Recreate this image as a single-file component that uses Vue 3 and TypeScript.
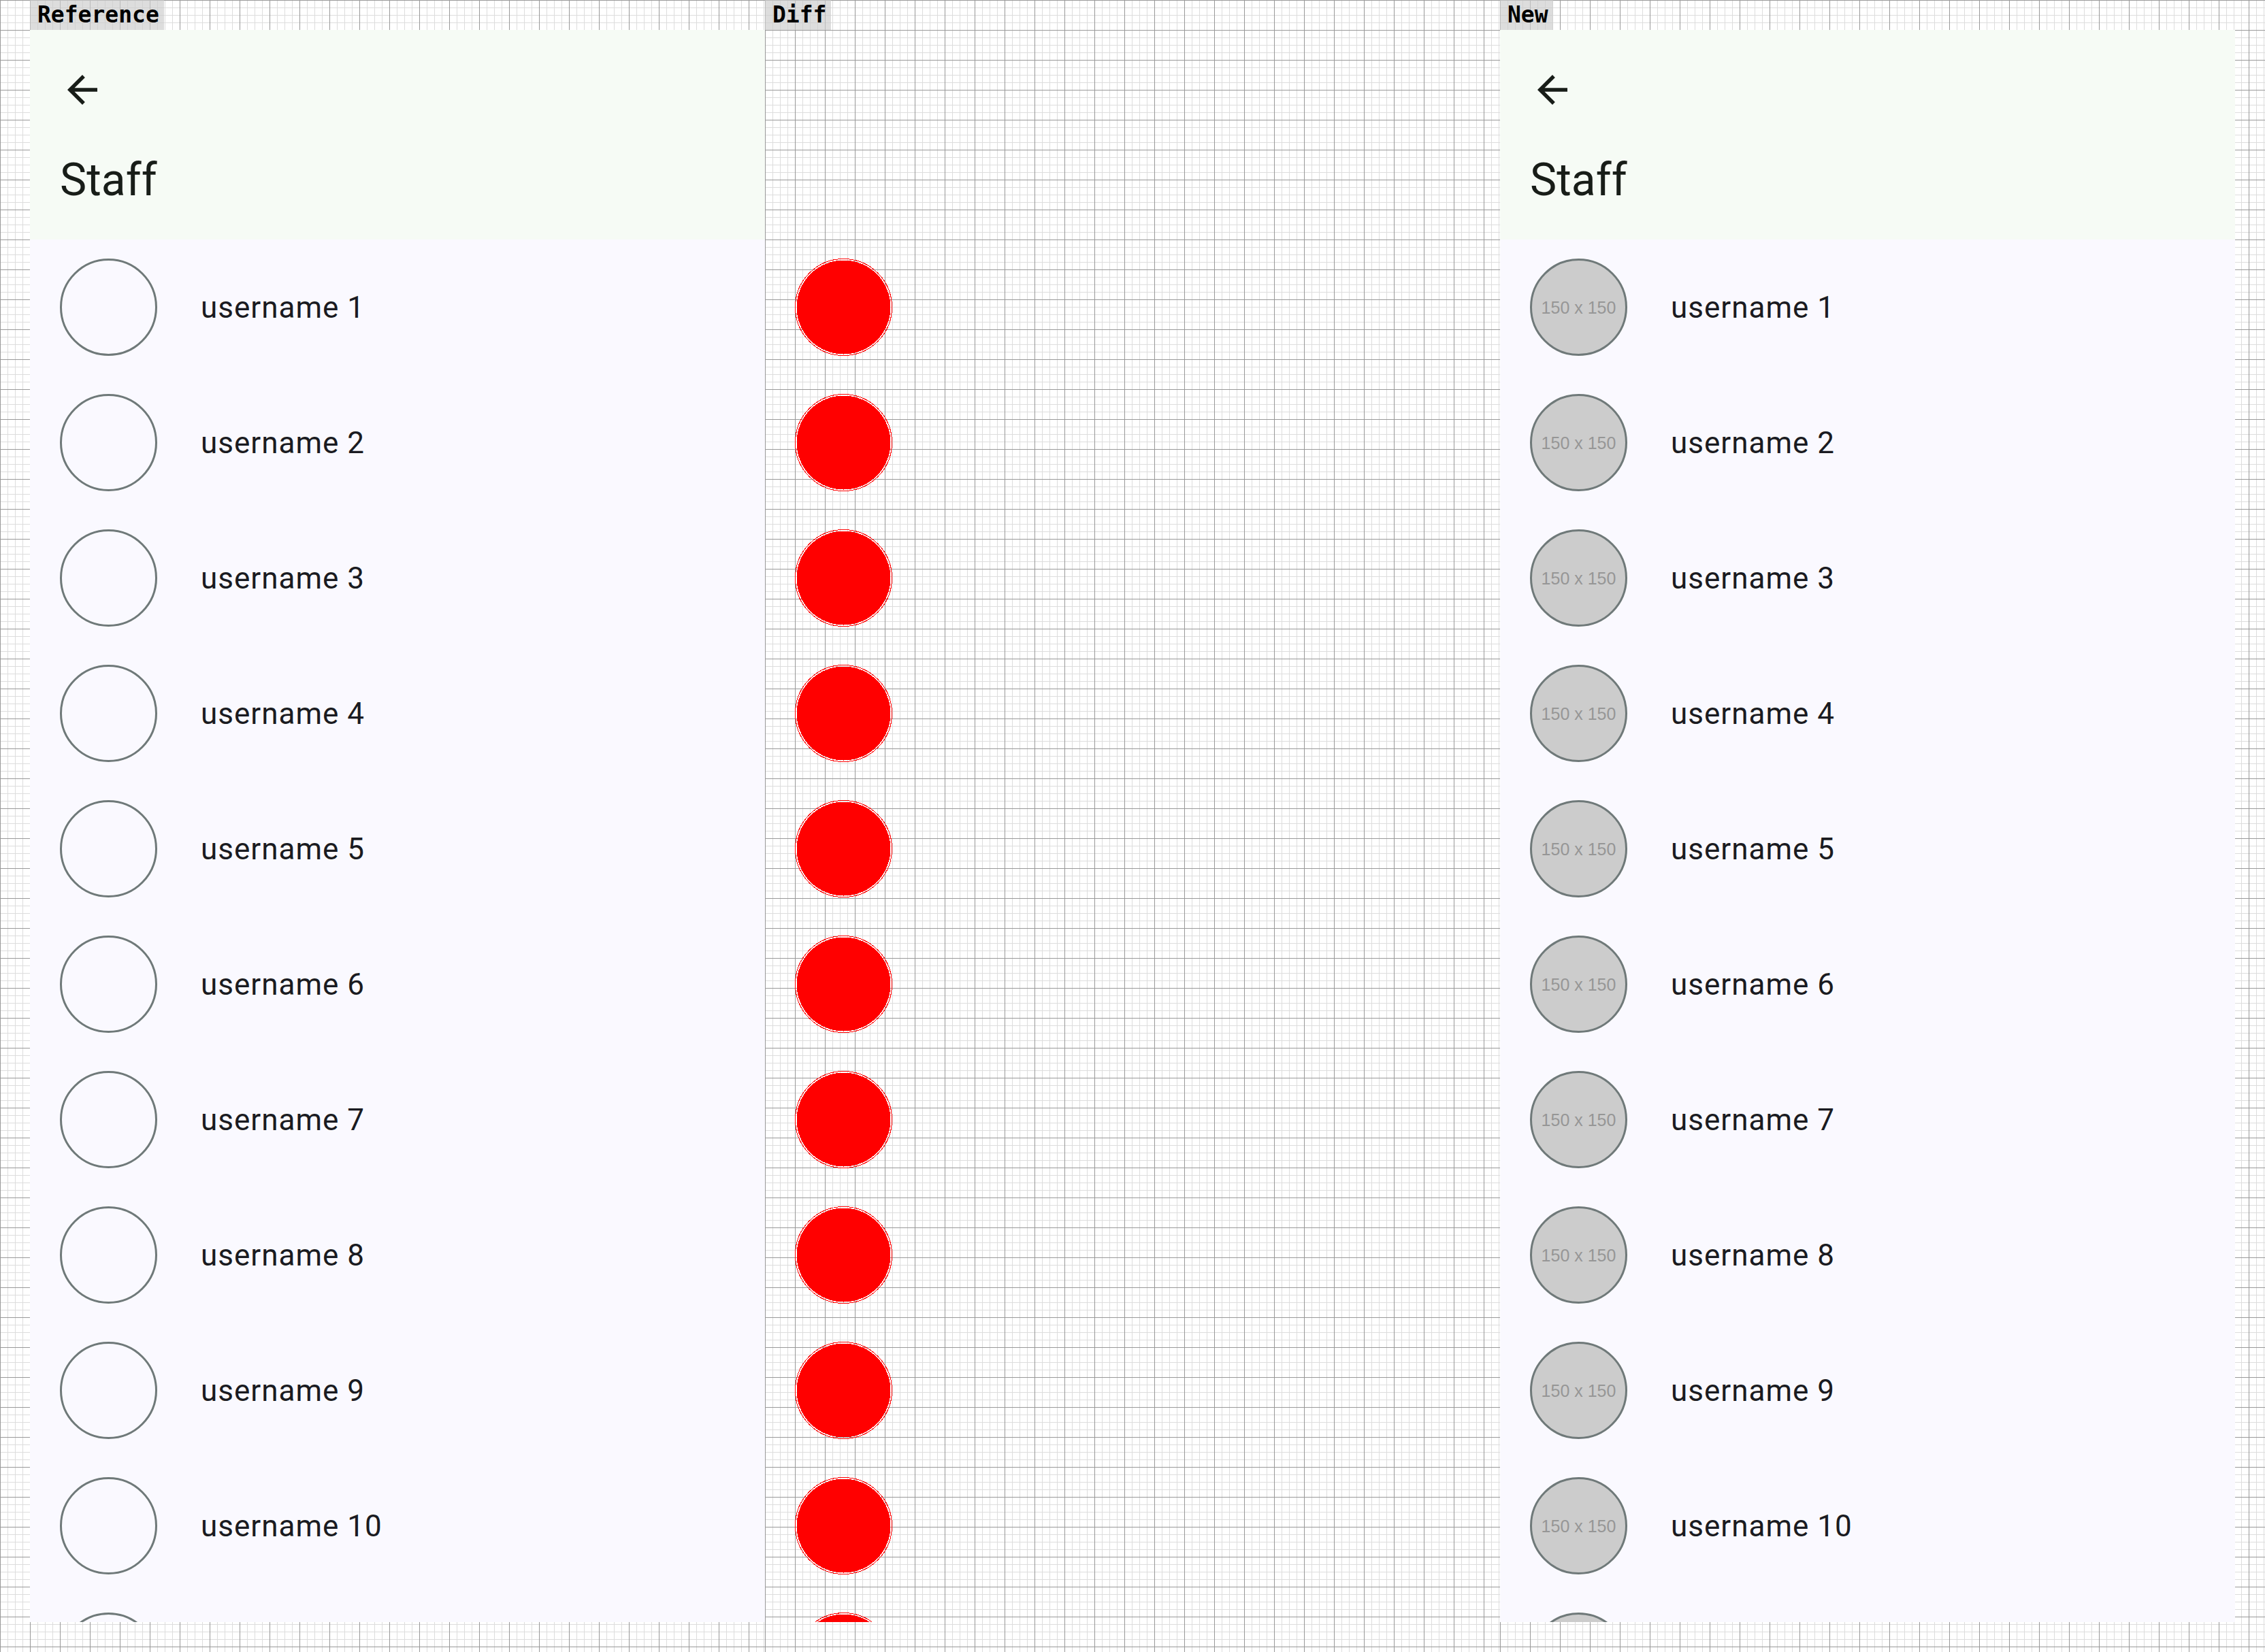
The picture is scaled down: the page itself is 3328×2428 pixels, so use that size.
<script setup lang="ts">
type Variant = 'reference' | 'new'

interface Panel {
  label: string
  variant: Variant | 'diff'
}

const panels: Panel[] = [
  { label: 'Reference', variant: 'reference' },
  { label: 'Diff', variant: 'diff' },
  { label: 'New', variant: 'new' },
]

// The last row is only partly scrolled into view, so it has no visible name.
const users: string[] = [...Array.from({ length: 10 }, (_, i) => `username ${i + 1}`), '']
</script>

<template>
  <main class="board">
    <section v-for="panel in panels" :key="panel.label" class="panel">
      <h2 class="label"><span>{{ panel.label }}</span></h2>

      <div v-if="panel.variant === 'diff'" class="screen">
        <div class="top-bar"></div>
        <ul class="list">
          <li v-for="user in users" :key="user" class="row">
            <svg class="mark" viewBox="0 0 143 143" aria-hidden="true">
              <circle cx="71.5" cy="71.5" r="71" fill="none" stroke="#f00" />
              <circle cx="71.5" cy="71.5" r="69" fill="#f00" />
            </svg>
          </li>
        </ul>
      </div>

      <div v-else class="screen app">
        <header class="top-bar filled">
          <button class="back" type="button" aria-label="Back">
            <svg viewBox="0 0 24 24" aria-hidden="true">
              <path d="M20 11H7.83l5.59-5.59L12 4l-8 8 8 8 1.41-1.41L7.83 13H20v-2z" fill="currentColor" />
            </svg>
          </button>
          <h1 class="title">Staff</h1>
        </header>
        <ul class="list">
          <li v-for="user in users" :key="user" class="row">
            <span class="avatar" :class="{ loaded: panel.variant === 'new' }">
              <template v-if="panel.variant === 'new' && user">150 x 150</template>
            </span>
            <span v-if="user" class="name">{{ user }}</span>
          </li>
        </ul>
      </div>
    </section>
  </main>
</template>

<style>
body {
  margin: 0;
}
</style>

<style scoped>
.board,
.panel {
  background-color: #fff;
  background-image:
    linear-gradient(to right, #999 1px, transparent 1px),
    linear-gradient(to bottom, #999 1px, transparent 1px),
    linear-gradient(to right, #ddd 1px, transparent 1px),
    linear-gradient(to bottom, #ddd 1px, transparent 1px);
  background-size: 44px 44px, 44px 44px, 11px 11px, 11px 11px;
}

.board {
  display: grid;
  grid-template-columns: 44px 1fr 1fr 1fr 44px;
  height: 100vh;
  box-sizing: border-box;
}

.panel {
  display: flex;
  flex-direction: column;
  min-width: 0;
  min-height: 0;
  box-sizing: border-box;
  padding-bottom: 44px;
}

.panel:first-child {
  grid-column: 2;
}

.panel:last-child {
  grid-column: 4 / 6;
  padding-right: 44px;
}

.label {
  display: flex;
  flex: none;
  height: 44px;
  margin: 0;
  font: bold 33px/44px "DejaVu Sans Mono", monospace;
  color: #000;
}

.label span {
  padding: 0 7px 0 11px;
  background: rgba(204, 204, 204, 0.67);
}

.screen {
  flex: 1;
  min-height: 0;
  overflow: hidden;
  font-family: Roboto, sans-serif;
}

.app {
  background: #faf9ff;
  color: #1a1b21;
}

.top-bar {
  box-sizing: border-box;
  height: 308px;
  padding: 55px 44px 0;
}

.filled {
  background: #f6fbf5;
  color: #181d18;
}

.back {
  display: block;
  width: 66px;
  height: 66px;
  padding: 0;
  border: 0;
  background: none;
  color: inherit;
}

.back svg {
  display: block;
  width: 66px;
  height: 66px;
}

.title {
  margin: 56px 0 0;
  font-size: 66px;
  line-height: 88px;
  font-weight: 400;
}

.list {
  margin: 0;
  padding: 0;
  list-style: none;
}

.row {
  display: flex;
  align-items: center;
  gap: 64px;
  height: 199px;
  padding: 0 44px;
}

.avatar,
.mark {
  flex: none;
  box-sizing: border-box;
  width: 143px;
  height: 143px;
}

.mark {
  display: block;
  shape-rendering: crispEdges;
}

.avatar {
  display: flex;
  align-items: center;
  justify-content: center;
  border: 3px solid #6f7979;
  border-radius: 50%;
}

.loaded {
  background: #ccc;
  color: #969696;
  font: 25px/32px "Liberation Sans", Arial, sans-serif;
}

.name {
  font-size: 44px;
  line-height: 66px;
  letter-spacing: 1px;
}
</style>
